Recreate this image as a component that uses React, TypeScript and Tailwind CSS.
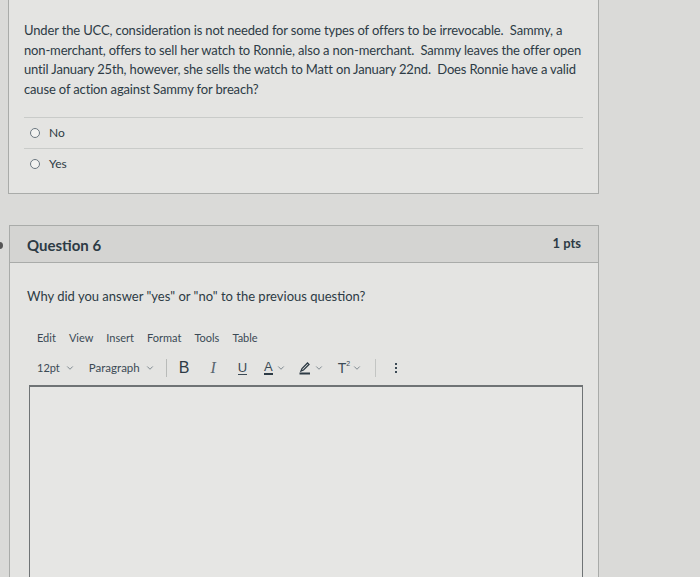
import { ChevronDown } from 'lucide-react'

function Radio({ label }: { label: string }) {
  return (
    <div className="flex items-center h-[30px] pl-[6px]">
      <span className="w-[10px] h-[10px] rounded-full border border-[#6b7780] bg-[#f2f2f0]" />
      <span className="ml-[9px] text-[12px] text-[#2d3b45]">{label}</span>
    </div>
  )
}

function Caret() {
  return <ChevronDown className="w-[10px] h-[10px] text-[#6b7780]" strokeWidth={2} />
}

export default function App() {
  return (
    <div className="w-[700px] h-[577px] overflow-hidden bg-[#dadad8] font-['Lato','Liberation_Sans',sans-serif] text-[#2d3b45] relative">
      <span className="absolute left-[-4px] top-[242px] w-[7px] h-[7px] rounded-full bg-[#555]" />

      {/* previous question */}
      <div className="ml-[8px] w-[591px] h-[194px] bg-[#e4e4e2] border-x border-b border-[#a9aba9] px-[15px] pt-[21px]">
        <p className="text-[13px] leading-[19.5px] tracking-[-0.15px] whitespace-nowrap">
          Under the UCC, consideration is not needed for some types of offers to be irrevocable.{'\u00a0 '}Sammy, a
          <br />
          non-merchant, offers to sell her watch to Ronnie, also a non-merchant.{'\u00a0 '}Sammy leaves the offer open
          <br />
          until January 25th, however, she sells the watch to Matt on January 22nd.{'\u00a0 '}Does Ronnie have a valid
          <br />
          cause of action against Sammy for breach?
        </p>
        <div className="mt-[18px] border-t border-[#c9cbc9]">
          <Radio label="No" />
        </div>
        <div className="border-t border-[#c9cbc9]">
          <Radio label="Yes" />
        </div>
      </div>

      {/* question 6 */}
      <div className="ml-[9px] mt-[31px] w-[590px] h-[400px] bg-[#e4e4e2] border border-[#a9aba9]">
        <div className="h-[37px] bg-[#d4d4d2] border-b border-[#a9aba9] flex items-center justify-between pl-[17px] pr-[17px]">
          <span className="text-[15px] font-bold mt-[3px]">Question 6</span>
          <span className="text-[13px] font-bold">1 pts</span>
        </div>
        <div className="px-[17px]">
          <p className="mt-[24px] text-[13px]">Why did you answer "yes" or "no" to the previous question?</p>

          <div className="mt-[23px] ml-[10px] flex gap-[13px] text-[11px] text-[#3b4a55]">
            <span>Edit</span>
            <span>View</span>
            <span>Insert</span>
            <span>Format</span>
            <span>Tools</span>
            <span>Table</span>
          </div>

          <div className="mt-[11px] ml-[10px] h-[22px] flex items-center text-[11px] text-[#3b4a55]">
            <span>12pt</span>
            <span className="ml-[5px]"><Caret /></span>
            <span className="ml-[14px] text-[11.5px]">Paragraph</span>
            <span className="ml-[5px]"><Caret /></span>
            <span className="ml-[11px] w-px h-[18px] bg-[#b9bbb9]" />
            <span className="ml-[12px] text-[16px] font-['Liberation_Sans',sans-serif] font-normal text-[#2d3b45]">B</span>
            <span className="ml-[21px] text-[16px] italic font-['Liberation_Serif',serif] text-[#5a6670]">I</span>
            <span className="ml-[22px] text-[13px] font-['Liberation_Sans',sans-serif] text-[#3b4a55] border-b border-[#3b4a55] leading-[12px]">U</span>
            <span className="ml-[17px] flex items-center">
              <span className="text-[13px] font-['Liberation_Sans',sans-serif] leading-[12px] border-b-2 border-[#2d3b45]">A</span>
              <span className="ml-[3px]"><Caret /></span>
            </span>
            <span className="ml-[12px] flex items-center">
              <svg width="14" height="14" viewBox="0 0 14 14" fill="none" stroke="#2d3b45" strokeWidth="1.3">
                <path d="M3 10 L4 7.5 L9.5 2 L11 3.5 L5.5 9 Z" />
                <path d="M1.5 12.5 H12" strokeWidth="2" />
              </svg>
              <span className="ml-[2px]"><Caret /></span>
            </span>
            <span className="ml-[14px] flex items-center">
              <span className="text-[14px] font-['Liberation_Sans',sans-serif]">T</span>
              <span className="text-[7px] -mt-[8px] font-['Liberation_Sans',sans-serif]">2</span>
              <span className="ml-[2px]"><Caret /></span>
            </span>
            <span className="ml-[13px] w-px h-[18px] bg-[#c3c5c3]" />
            <span className="ml-[19px] flex flex-col gap-[2px]">
              <span className="w-[2px] h-[2px] bg-[#3b4a55]" />
              <span className="w-[2px] h-[2px] bg-[#3b4a55]" />
              <span className="w-[2px] h-[2px] bg-[#3b4a55]" />
            </span>
          </div>

          <div className="mt-[6px] ml-[2px] mr-[-2px] h-[220px] border border-[#6f7375] border-t-2 bg-[#e6e6e4]" />
        </div>
      </div>
    </div>
  )
}
